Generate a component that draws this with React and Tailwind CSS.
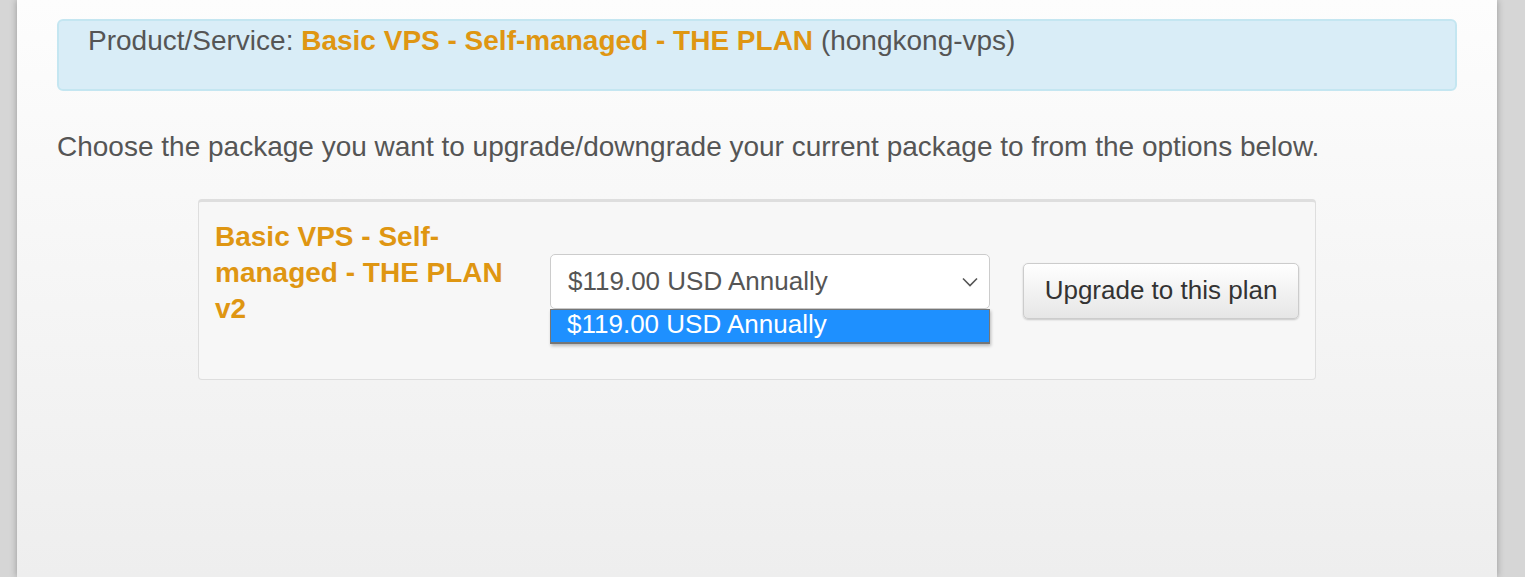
import React from "react";

const App = () => {
  return (
    <div
      className="h-[577px] overflow-hidden bg-[#d6d6d6] pl-[17px] pr-[28px]"
      style={{ fontFamily: '"Liberation Sans", Arial, sans-serif' }}
    >
      {/* Main panel */}
      <div className="h-full bg-gradient-to-b from-[#fdfdfd] to-[#eeeeee] px-[40px] pt-[19px] shadow-[0_0_7px_rgba(0,0,0,0.3)]">
        {/* Product info alert */}
        <div className="h-[72px] rounded-[6px] border-2 border-[#c4e6f1] bg-[#d9edf7] pl-[29px] pt-[3px] text-[28px] leading-[34px] text-[#555555]">
          Product/Service:{" "}
          <strong className="text-[#df9612]">
            Basic VPS - Self-managed - THE PLAN
          </strong>{" "}
          (hongkong-vps)
        </div>

        <p className="mt-[39px] text-[28px] leading-[34px] text-[#555555]">
          Choose the package you want to upgrade/downgrade your current package
          to from the options below.
        </p>

        {/* Package card */}
        <div className="ml-[141px] mt-[35px] h-[181px] w-[1118px] rounded-[4px] border border-t-[3px] border-[#dedede] bg-[#f7f7f7] pl-[16px] pt-[17px]">
          <div className="flex items-start">
            <div className="w-[335px] text-[28px] font-bold leading-[36px] text-[#df9612]">
              Basic VPS - Self-
              <br />
              managed - THE PLAN
              <br />
              v2
            </div>

            <div className="relative mt-[35px]">
              <div className="flex h-[55px] w-[440px] items-center justify-between rounded-[5px] border border-[#cccccc] bg-white pl-[17px] pr-[11px] text-[26px] text-[#555555]">
                <span>$119.00 USD Annually</span>
                <svg
                  width="16"
                  height="10"
                  viewBox="0 0 16 10"
                  fill="none"
                  stroke="#555555"
                  strokeWidth="1.6"
                >
                  <path d="M1 1.5l7 7 7-7" />
                </svg>
              </div>
              {/* Open dropdown list */}
              <div className="absolute left-0 top-[55px] h-[35px] w-[440px] border border-[#767676] border-b-[2px] bg-[#1e90ff] pl-[16px] text-[26px] leading-[29px] text-white shadow-[1px_2px_3px_rgba(0,0,0,0.25)]">
                $119.00 USD Annually
              </div>
            </div>

            <button className="ml-[33px] mt-[44px] h-[56px] w-[276px] rounded-[5px] border border-[#cccccc] bg-gradient-to-b from-white to-[#e6e6e6] pb-[2px] text-[26px] text-[#333333] shadow-[0_1px_2px_rgba(0,0,0,0.2)]">
              Upgrade to this plan
            </button>
          </div>
        </div>
      </div>
    </div>
  );
};

export default App;
